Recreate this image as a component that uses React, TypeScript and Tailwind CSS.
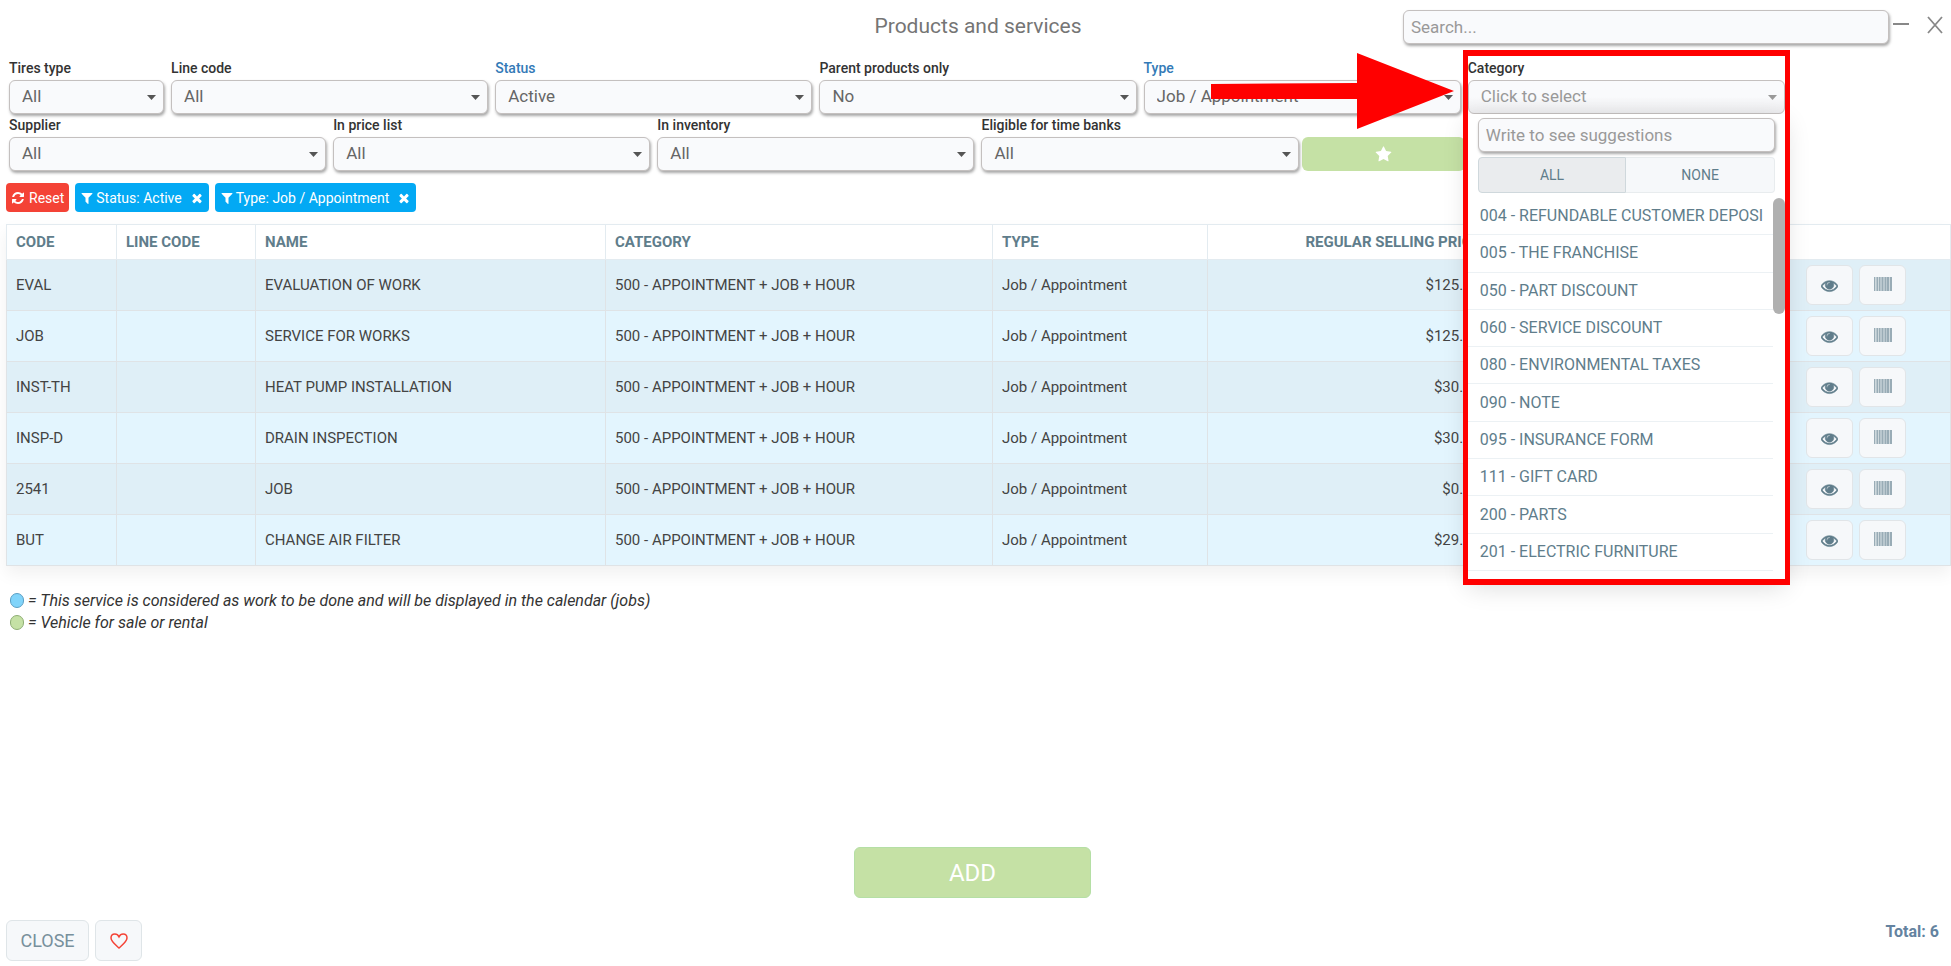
import React from "react";

type SvgProps = { className?: string };

function Glyph({ d, className }: SvgProps & { d: string }) {
  return (
    <svg viewBox="0 0 1792 1792" fill="currentColor" aria-hidden="true" className={className}>
      <path d={d} />
    </svg>
  );
}

const REFRESH =
  "M1639 1056q0 5-1 7-64 268-268 434.5t-478 166.5q-146 0-282.5-55t-243.5-157l-129 129q-19 19-45 19t-45-19-19-45v-448q0-26 19-45t45-19h448q26 0 45 19t19 45-19 45l-137 137q71 66 161 102t187 36q134 0 250-65t186-179q11-17 53-117 8-23 30-23h192q13 0 22.5 9.5t9.5 22.5zm25-800v448q0 26-19 45t-45 19h-448q-26 0-45-19t-19-45 19-45l138-138q-148-137-349-137-134 0-250 65t-186 179q-11 17-53 117-8 23-30 23h-199q-13 0-22.5-9.5t-9.5-22.5v-7q65-268 270-434.5t480-166.5q146 0 284 55.5t245 156.5l130-129q19-19 45-19t45 19 19 45z";
const FILTER =
  "M1595 295q17 41-14 70l-493 493v742q0 42-39 59-13 5-25 5-27 0-45-19l-256-256q-19-19-19-45v-486l-493-493q-31-29-14-70 17-39 59-39h1280q42 0 59 39z";
const TIMES =
  "M1490 1322q0 40-28 68l-136 136q-28 28-68 28t-68-28l-294-294-294 294q-28 28-68 28t-68-28l-136-136q-28-28-28-68t28-68l294-294-294-294q-28-28-28-68t28-68l136-136q28-28 68-28t68 28l294 294 294-294q28-28 68-28t68 28l136 136q28 28 28 68t-28 68l-294 294 294 294q28 28 28 68z";
const EYE =
  "M1664 960q-152-236-381-353 61 104 61 225 0 185-131.5 316.5t-316.5 131.5-316.5-131.5-131.5-316.5q0-121 61-225-229 117-381 353 133 205 333.5 326.5t434.5 121.5 434.5-121.5 333.5-326.5zm-720-384q0-20-14-34t-34-14q-125 0-214.5 89.5t-89.5 214.5q0 20 14 34t34 14 34-14 14-34q0-86 61-147t147-61q20 0 34-14t14-34zm848 384q0 34-20 69-140 230-376.5 368.5t-499.5 138.5-499.5-139-376.5-368q-20-35-20-69t20-69q140-229 376.5-368t499.5-139 499.5 139 376.5 368q20 35 20 69z";
const STAR =
  "M1728 647q0 22-26 48l-363 354 86 500q1 7 1 20 0 21-10.500 35.500t-30.500 14.500q-19 0-40-12l-449-236-449 236q-22 12-40 12-21 0-31.500-14.500t-10.500-35.500q0-6 2-20l86-500-364-354q-25-27-25-48 0-37 56-46l502-73 225-455q19-41 49-41t49 41l225 455 502 73q56 9 56 46z";

function Barcode({ className }: SvgProps) {
  return (
    <svg viewBox="0 0 18 14" fill="currentColor" aria-hidden="true" className={className}>
      <rect x="0" y="0" width="18" height="14" opacity="0.400" />
      <g opacity="0.350">
        <rect x="0" y="0" width="1" height="14" />
        <rect x="3" y="0" width="1" height="14" />
        <rect x="5" y="0" width="1" height="14" />
        <rect x="8" y="0" width="1" height="14" />
        <rect x="11" y="0" width="1" height="14" />
        <rect x="13" y="0" width="2" height="14" />
        <rect x="16" y="0" width="2" height="14" />
      </g>
      <g fill="#ffffff" opacity="0.300">
        <rect x="1" y="0" width="1" height="14" />
        <rect x="4" y="0" width="1" height="14" />
        <rect x="15" y="0" width="1" height="14" />
      </g>
    </svg>
  );
}

const CONTROL =
  "h-[34px] w-full rounded-md border border-[#c4c0bf] bg-[#f9fafc] text-[17px] shadow-[1px_2px_3px_rgba(0,0,0,0.35)] outline-none";

type FilterProps = {
  id: string;
  label: string;
  value: string;
  span: string;
  active?: boolean;
};

function FilterSelect({ id, label, value, span, active }: FilterProps) {
  return (
    <div className={span}>
      <label
        htmlFor={id}
        className={`block h-[23px] text-sm leading-[23px] font-medium ${active ? "text-[#337ab7]" : "text-[#333333]"}`}
      >
        {label}
      </label>
      <div className="relative">
        <select id={id} className={`${CONTROL} appearance-none px-3 text-[#666666]`}>
          <option>{value}</option>
        </select>
        <Caret className="text-[#555555]" />
      </div>
    </div>
  );
}

function Caret({ className }: SvgProps) {
  return (
    <svg
      viewBox="0 0 9 5"
      fill="currentColor"
      aria-hidden="true"
      className={`pointer-events-none absolute top-[15px] right-2 h-[5px] w-[9px] ${className}`}
    >
      <path d="M0 0h9L4.500 5z" />
    </svg>
  );
}

const CATEGORIES = [
  "004 - REFUNDABLE CUSTOMER DEPOSI",
  "005 - THE FRANCHISE",
  "050 - PART DISCOUNT",
  "060 - SERVICE DISCOUNT",
  "080 - ENVIRONMENTAL TAXES",
  "090 - NOTE",
  "095 - INSURANCE FORM",
  "111 - GIFT CARD",
  "200 - PARTS",
  "201 - ELECTRIC FURNITURE",
];

function CategoryFilter() {
  return (
    <div className="relative z-10 col-span-2">
      <label htmlFor="category" className="block h-[23px] text-sm leading-[23px] font-medium text-[#333333]">
        Category
      </label>
      <div className="relative">
        <select
          id="category"
          className="h-[34px] w-full appearance-none rounded-md border border-[#c4c0bf] bg-linear-to-b from-[#f9fafc] from-50% to-[#ececee] px-3 text-[17px] text-[#999999] outline-none"
        >
          <option>Click to select</option>
        </select>
        <Caret className="text-[#999999]" />
      </div>
      <div className="absolute inset-x-0 top-full h-[465px] bg-white px-[10px] pt-1 shadow-[0_8px_24px_rgba(0,0,0,0.14)]">
        <input
          type="text"
          aria-label="Write to see suggestions"
          placeholder="Write to see suggestions"
          className={`${CONTROL} px-[7px] placeholder:text-[#999999]`}
        />
        <div className="mt-[5px] grid h-9 grid-cols-2 text-sm text-[#607d8b]">
          <button type="button" className="rounded-l border border-[#cfd8dc] bg-[#eaecee]">
            ALL
          </button>
          <button type="button" className="rounded-r border border-l-0 border-[#e8ecee] bg-[#f6f8fa]">
            NONE
          </button>
        </div>
        <div className="-mx-[10px] mt-[5px] flex">
          <ul className="grid h-[373px] min-w-0 flex-1 grid-rows-10 text-base text-[#607d8b]">
            {CATEGORIES.map((name) => (
              <li
                key={name}
                className="flex items-center overflow-hidden border-b border-[#ecf1f4] pl-3 whitespace-nowrap"
              >
                {name}
              </li>
            ))}
          </ul>
          <div className="w-3 shrink-0">
            <div className="h-[116px] rounded-full bg-[#b0b0b0]" />
          </div>
        </div>
      </div>
      <div className="pointer-events-none absolute -inset-x-[5px] -top-[7px] h-[535px] border-x-[5px] border-y-[6px] border-[#ff0000]" />
      <svg
        viewBox="0 0 243 76"
        fill="#ff0000"
        aria-hidden="true"
        className="pointer-events-none absolute -top-1 right-full mr-[14px] h-[76px] w-[243px]"
      >
        <path d="M0 31L146 30V0L243 38L146 76V46H0z" />
      </svg>
    </div>
  );
}

function FilterTag({ text }: { text: string }) {
  return (
    <button
      type="button"
      className="flex h-[29px] items-center rounded bg-[#03a9f4] px-[5px] text-sm text-white"
    >
      <Glyph d={FILTER} className="mr-0.5 size-[14px]" />
      {text}
      <Glyph d={TIMES} className="ml-2 size-[14px]" />
    </button>
  );
}

const ROWS = [
  { code: "EVAL", name: "EVALUATION OF WORK", price: "$125.00" },
  { code: "JOB", name: "SERVICE FOR WORKS", price: "$125.00" },
  { code: "INST-TH", name: "HEAT PUMP INSTALLATION", price: "$30.00" },
  { code: "INSP-D", name: "DRAIN INSPECTION", price: "$30.00" },
  { code: "2541", name: "JOB", price: "$0.00" },
  { code: "BUT", name: "CHANGE AIR FILTER", price: "$29.00" },
];

const TH = "border border-[#e3ebf0] px-[9px] text-left font-bold";
const TD = "border border-[#dfe3e6] px-[9px]";
const ICON_BUTTON =
  "flex h-10 w-[47px] items-center justify-center rounded-md border border-[#e1e5e8] bg-[#f6f8fa] text-[#607d8b]";

function ProductTable() {
  return (
    <table className="w-full table-fixed border-collapse text-[15px] shadow-[0_8px_16px_rgba(0,0,0,0.06)]">
      <colgroup>
        <col className="w-[110px]" />
        <col className="w-[139px]" />
        <col className="w-[350px]" />
        <col className="w-[387px]" />
        <col className="w-[215px]" />
        <col className="w-[283px]" />
        <col />
      </colgroup>
      <thead>
        <tr className="h-[35px] text-[#607d8b]">
          <th className={TH}>CODE</th>
          <th className={TH}>LINE CODE</th>
          <th className={TH}>NAME</th>
          <th className={TH}>CATEGORY</th>
          <th className={TH}>TYPE</th>
          <th className="border border-[#e3ebf0] px-[10px] text-right font-bold">REGULAR SELLING PRICE</th>
          <th className={TH} aria-label="Actions" />
        </tr>
      </thead>
      <tbody>
        {ROWS.map((row) => (
          <tr key={row.code} className="h-[51px] text-[#444444] odd:bg-[#dfeff7] even:bg-[#e3f5fe]">
            <td className={TD}>{row.code}</td>
            <td className={TD} />
            <td className={TD}>{row.name}</td>
            <td className={TD}>500 - APPOINTMENT + JOB + HOUR</td>
            <td className={TD}>Job / Appointment</td>
            <td className="border border-[#dfe3e6] px-[10px] text-right">{row.price}</td>
            <td className="border border-[#dfe3e6] pr-[44px]">
              <div className="flex justify-end gap-1.5">
                <button type="button" aria-label={`View ${row.name}`} className={ICON_BUTTON}>
                  <Glyph d={EYE} className="size-[17px] stroke-current stroke-[60]" />
                </button>
                <button type="button" aria-label={`Barcode ${row.name}`} className={ICON_BUTTON}>
                  <Barcode className="mb-0.5 h-[14px] w-[18px]" />
                </button>
              </div>
            </td>
          </tr>
        ))}
      </tbody>
    </table>
  );
}

export default function App() {
  return (
    <div className="flex min-h-screen flex-col bg-white font-[Roboto,sans-serif] text-[#333333]">
      <header className="grid grid-cols-[1fr_auto_1fr] items-start pl-[5px]">
        <h1 className="col-start-2 pt-3 text-[21px] leading-7 text-[#757575]">Products and services</h1>
        <div className="flex justify-end pt-[10px] pr-2">
          <input
            type="search"
            aria-label="Search"
            placeholder="Search..."
            className={`${CONTROL} max-w-[486px] min-w-0 px-[7px] placeholder:text-[#999999]`}
          />
          <button type="button" aria-label="Minimize" className="ml-1 h-7 w-4 shrink-0 text-[#888888]">
            <svg viewBox="0 0 16 28" stroke="currentColor" strokeWidth="2" className="h-7 w-4">
              <path d="M0 14h16" />
            </svg>
          </button>
          <button type="button" aria-label="Close window" className="ml-[18px] h-7 w-4 shrink-0 text-[#888888]">
            <svg viewBox="0 0 16 28" stroke="currentColor" strokeWidth="1.800" className="h-7 w-4">
              <path d="M1 7l14 16M15 7L1 23" />
            </svg>
          </button>
        </div>
      </header>

      <section className="mt-[13px] grid grid-cols-12 gap-x-[7px] pr-1 pl-[9px]">
        <FilterSelect id="tires" label="Tires type" value="All" span="col-span-1" />
        <FilterSelect id="line-code" label="Line code" value="All" span="col-span-2" />
        <FilterSelect id="status" label="Status" value="Active" span="col-span-2" active />
        <FilterSelect id="parent" label="Parent products only" value="No" span="col-span-2" />
        <FilterSelect id="type" label="Type" value="Job / Appointment" span="col-span-2" active />
        <CategoryFilter />
        <FilterSelect id="supplier" label="Supplier" value="All" span="col-span-2 col-start-1" />
        <FilterSelect id="price-list" label="In price list" value="All" span="col-span-2" />
        <FilterSelect id="inventory" label="In inventory" value="All" span="col-span-2" />
        <FilterSelect id="time-banks" label="Eligible for time banks" value="All" span="col-span-2" />
        <button
          type="button"
          aria-label="Favorites"
          className="-mx-1 flex h-[34px] items-center justify-center self-end rounded-md bg-[#c5e1a5] text-white"
        >
          <Glyph d={STAR} className="size-[17px]" />
        </button>
      </section>

      <div className="mt-3 flex gap-1.5 px-1.5">
        <button
          type="button"
          className="flex h-[29px] items-center gap-1 rounded bg-[#f44336] px-[5px] text-sm text-white"
        >
          <Glyph d={REFRESH} className="size-[14px]" />
          Reset
        </button>
        <FilterTag text="Status: Active" />
        <FilterTag text="Type: Job / Appointment" />
      </div>

      <main className="mt-3 pl-1.5">
        <ProductTable />
        <ul className="mt-6 pl-1 text-base leading-[22px] italic">
          <li className="flex items-center gap-1">
            <span className="mb-0.5 h-[15px] w-[14px] rounded-full border border-[#5b9fc4] bg-[#81d4fa]" />
            = This service is considered as work to be done and will be displayed in the calendar (jobs)
          </li>
          <li className="flex items-center gap-1">
            <span className="mb-0.5 h-[15px] w-[14px] rounded-full border border-[#8fae74] bg-[#c5e1a5]" />
            = Vehicle for sale or rental
          </li>
        </ul>
      </main>

      <footer className="mt-auto flex flex-col gap-[22px] pr-3 pb-[5px] pl-1.5">
        <button
          type="button"
          className="h-[51px] w-[237px] self-center rounded-md border border-[#b5dfa5] bg-[#c5e1a5] text-2xl text-white"
        >
          ADD
        </button>
        <div className="flex items-start gap-1.5">
          <button
            type="button"
            className="h-[41px] w-[83px] rounded-md border border-[#dfe5e8] bg-[#f6f8fa] text-lg text-[#78909c]"
          >
            CLOSE
          </button>
          <button
            type="button"
            aria-label="Favorite"
            className="flex h-[41px] w-[47px] items-center justify-center rounded-md border border-[#dfe5e8] bg-[#f6f8fa] text-[#f44336]"
          >
            <svg viewBox="0 0 18 16" fill="none" stroke="currentColor" strokeWidth="1.500" className="h-4 w-[18px]">
              <path d="M9 15C6.500 12.600 1 8.600 1 5C1 2.600 2.700 1 4.900 1C6.800 1 8.200 2.200 9 3.800C9.800 2.200 11.200 1 13.100 1C15.300 1 17 2.600 17 5C17 8.600 11.500 12.600 9 15Z" />
            </svg>
          </button>
          <p className="ml-auto text-base leading-6 font-bold text-[#6483a0]">Total: 6</p>
        </div>
      </footer>
    </div>
  );
}
